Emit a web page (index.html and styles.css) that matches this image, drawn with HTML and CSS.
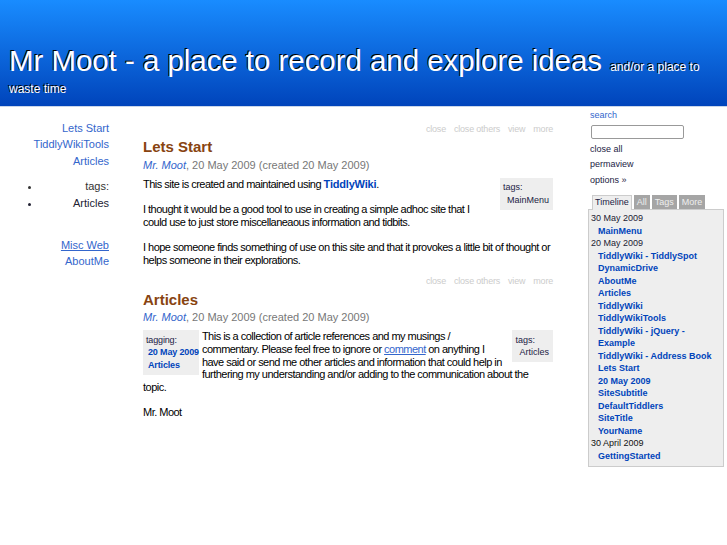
FILE: index.html
```html
<!DOCTYPE html>
<html lang="en">
<head>
<meta charset="utf-8">
<title>Mr Moot - a place to record and explore ideas</title>
<link rel="stylesheet" href="styles.css">
</head>
<body>
<header class="header">
  <h1 class="site-title">Mr Moot - a place to record and explore ideas <span class="site-subtitle">and/or a place to waste time</span></h1>
</header>
<div class="layout">
  <nav class="main-menu">
    <a class="menu-link" href="#">Lets Start</a>
    <a class="menu-link" href="#">TiddlyWikiTools</a>
    <a class="menu-link" href="#">Articles</a>
    <ul class="menu-tags">
      <li class="menu-tags-label">tags:</li>
      <li class="menu-tags-item">Articles</li>
    </ul>
    <div class="menu-gap"></div>
    <a class="menu-link external" href="#">Misc Web</a>
    <a class="menu-link" href="#">AboutMe</a>
  </nav>

  <main class="display">
    <article class="tiddler">
      <div class="toolbar"><span>close</span><span>close others</span><span>view</span><span>more</span></div>
      <h2 class="title">Lets Start</h2>
      <div class="subtitle"><a class="author" href="#">Mr. Moot</a>, 20 May 2009 (created 20 May 2009)</div>
      <div class="tiddler-body">
        <div class="tagged">tags:<ul><li class="tag-plain">MainMenu</li></ul></div>
        <div class="viewer">This site is created and maintained using <a class="tiddly-link" href="#">TiddlyWiki</a>.<br><br>I thought it would be a good tool to use in creating a simple adhoc site that I could use to just store miscellaneaous information and tidbits.<br><br>I hope someone finds something of use on this site and that it provokes a little bit of thought or helps someone in their explorations.</div>
      </div>
    </article>

    <article class="tiddler">
      <div class="toolbar"><span>close</span><span>close others</span><span>view</span><span>more</span></div>
      <h2 class="title">Articles</h2>
      <div class="subtitle"><a class="author" href="#">Mr. Moot</a>, 20 May 2009 (created 20 May 2009)</div>
      <div class="tiddler-body">
        <div class="tagging">tagging:<ul><li><a class="tag-link" href="#">20 May 2009</a></li><li><a class="tag-link" href="#">Articles</a></li></ul></div>
        <div class="tagged tagged-narrow">tags:<ul><li class="tag-plain">Articles</li></ul></div>
        <div class="viewer">This is a collection of article references and my musings / commentary. Please feel free to ignore or <a class="external-link" href="#">comment</a> on anything I have said or send me other articles and information that could help in furthering my understanding and/or adding to the communication about the topic.<br><br>Mr. Moot</div>
      </div>
    </article>
  </main>

  <aside class="sidebar">
    <div class="search-label">search</div>
    <div class="search-input"></div>
    <div class="options">
      <div>close all</div>
      <div>permaview</div>
      <div>options &raquo;</div>
    </div>
    <div class="tabset">
      <span class="tab selected">Timeline</span>
      <span class="tab">All</span>
      <span class="tab">Tags</span>
      <span class="tab">More</span>
    </div>
    <div class="tab-contents">
      <div class="tl-date">30 May 2009</div>
      <a class="tl-link" href="#">MainMenu</a>
      <div class="tl-date">20 May 2009</div>
      <a class="tl-link" href="#">TiddlyWiki - TiddlySpot</a>
      <a class="tl-link" href="#">DynamicDrive</a>
      <a class="tl-link" href="#">AboutMe</a>
      <a class="tl-link" href="#">Articles</a>
      <a class="tl-link" href="#">TiddlyWiki</a>
      <a class="tl-link" href="#">TiddlyWikiTools</a>
      <a class="tl-link" href="#">TiddlyWiki - jQuery - Example</a>
      <a class="tl-link" href="#">TiddlyWiki - Address Book</a>
      <a class="tl-link" href="#">Lets Start</a>
      <a class="tl-link" href="#">20 May 2009</a>
      <a class="tl-link" href="#">SiteSubtitle</a>
      <a class="tl-link" href="#">DefaultTiddlers</a>
      <a class="tl-link" href="#">SiteTitle</a>
      <a class="tl-link" href="#">YourName</a>
      <div class="tl-date tl-date-black">30 April 2009</div>
      <a class="tl-link" href="#">GettingStarted</a>
    </div>
  </aside>
</div>
</body>
</html>
```
FILE: styles.css
```css
html, body {
  margin: 0;
  padding: 0;
  background: #fff;
}

body {
  font-family: "Liberation Sans", Arial, sans-serif;
  font-size: 11px;
  color: #000;
}

a {
  text-decoration: none;
}

/* ---------- header ---------- */
.header {
  box-sizing: border-box;
  height: 107px;
  padding: 0 9px;
  background: linear-gradient(#198cff, #0044bb);
  border-bottom: 1px solid #c9d6ea;
}

.site-title {
  margin: 0;
  padding-top: 51px;
  font-size: 29.4px;
  font-weight: normal;
  line-height: 20px;
  color: #fff;
  text-shadow: -1px -1px 0 #000;
}

.site-subtitle {
  font-size: 12px;
  line-height: 12px;
}

/* ---------- layout ---------- */
.layout {
  display: flex;
  align-items: flex-start;
}

/* ---------- main menu ---------- */
.main-menu {
  box-sizing: border-box;
  width: 110px;
  padding: 12.75px 1px 0 0;
  text-align: right;
  font-size: 11px;
  line-height: 16.5px;
}

.menu-link {
  display: block;
  color: #3366cc;
}

.menu-link.external {
  text-decoration: underline;
}

.menu-tags {
  margin: 9px 0;
  padding: 0 0 0 41px;
  list-style: disc;
  color: #333;
}

.menu-tags-item {
  color: #223;
}

.menu-gap {
  height: 16.5px;
}

/* ---------- display ---------- */
.display {
  width: 410px;
  margin-left: 33px;
  padding-top: 16px;
}

.tiddler {
  margin-bottom: 8.7px;
}

.toolbar {
  display: flex;
  justify-content: flex-end;
  gap: 8px;
  font-size: 9px;
  line-height: 12px;
  letter-spacing: -0.2px;
  color: #ccc;
}

.title {
  margin: 3.4px 0 0;
  font-size: 15px;
  line-height: 17.25px;
  font-weight: bold;
  color: #884411;
}

.subtitle {
  margin-top: 3px;
  font-size: 11px;
  line-height: 12.65px;
  color: #777;
}

.author {
  color: #3366cc;
  font-style: italic;
}

.tiddler-body {
  display: flow-root;
  margin-top: 6.7px;
}

.viewer {
  font-size: 11px;
  line-height: 12.65px;
  letter-spacing: -0.52px;
}

.tiddly-link {
  color: #0044bb;
  font-weight: bold;
  letter-spacing: -0.2px;
}

.external-link {
  color: #3366cc;
  text-decoration: underline;
}

.tagged,
.tagging {
  background: #eee;
  font-size: 9px;
  line-height: 12.5px;
  color: #224;
}

.tagged {
  float: right;
  margin-left: 5px;
  padding: 3.5px 4px 3.5px 3px;
}

.tagging {
  float: left;
  margin-right: 3px;
  padding: 3.5px 0 3.5px 3px;
  letter-spacing: -0.15px;
}

.tagged ul,
.tagging ul {
  list-style: none;
  margin: 0 0 0 4px;
  padding: 0;
}

.tagging ul {
  margin-left: 2px;
}

.tag-plain {
  color: #224;
}

.tag-link {
  color: #0044bb;
  font-weight: bold;
}

/* ---------- sidebar ---------- */
.sidebar {
  width: 136px;
  margin-left: 35px;
  padding-top: 2px;
}

.search-label {
  padding-left: 2px;
  font-size: 9px;
  line-height: 12px;
  color: #3366cc;
}

.search-input {
  box-sizing: border-box;
  width: 93px;
  height: 14px;
  margin: 4px 0 0 3px;
  border: 1px solid #999;
  border-radius: 2px;
  background: #fff;
}

.options {
  margin-top: 2.75px;
  padding-left: 2px;
  font-size: 9px;
  line-height: 15.5px;
  color: #224;
}

.tabset {
  display: flex;
  gap: 2px;
  margin: 7px 0 0 4px;
  position: relative;
  z-index: 1;
}

.tab {
  padding: 0 2px;
  font-size: 9px;
  line-height: 13px;
  background: #a5a5a5;
  color: #eee;
  border: 1px solid #a5a5a5;
  border-bottom: 0;
}

.tab.selected {
  background: #eee;
  color: #224;
  border-color: #ccc;
  margin-bottom: -1px;
  padding-bottom: 1px;
}

.tab-contents {
  border: 1px solid #ccc;
  background: #eee;
  padding: 2px 2px 4px;
  font-size: 9px;
  line-height: 12.5px;
}

.tl-date {
  color: #223;
}

.tl-date-black {
  color: #111;
}

.tl-link {
  display: block;
  padding-left: 7px;
  color: #0044bb;
  font-weight: bold;
}
```
